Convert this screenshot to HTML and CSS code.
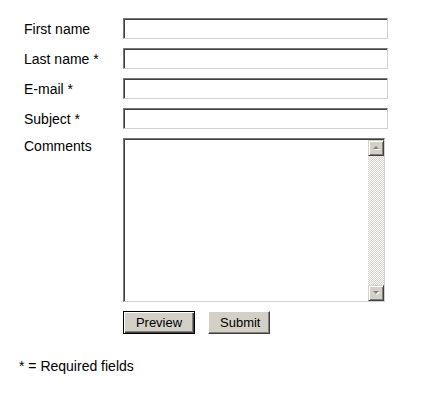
FILE: index.html
```html
<!DOCTYPE html>
<html lang="en">
<head>
    <meta charset="UTF-8">
    <title>Contact</title>
    <link rel="stylesheet" href="styles.css">
</head>
<body>
    <form class="contact-form" onsubmit="return false">
        <div class="form-grid">
            <label for="first-name">First name</label>
            <input type="text" id="first-name" class="field">

            <label for="last-name">Last name *</label>
            <input type="text" id="last-name" class="field">

            <label for="email">E-mail *</label>
            <input type="text" id="email" class="field">

            <label for="subject">Subject *</label>
            <input type="text" id="subject" class="field">

            <label for="comments" class="label-top">Comments</label>
            <div class="comments-box">
                <textarea id="comments"></textarea>
                <!-- old style scrollbar -->
                <div class="scrollbar">
                    <span class="scroll-btn">
                        <svg width="7" height="5" viewBox="0 0 7 5"><path d="M1 4h6L4 1z" fill="#fff"/><path d="M0 3h6L3 0z" fill="#808080"/></svg>
                    </span>
                    <span class="scroll-track"></span>
                    <span class="scroll-btn">
                        <svg width="7" height="5" viewBox="0 0 7 5"><path d="M1 1h6L4 4z" fill="#fff"/><path d="M0 0h6L3 3z" fill="#808080"/></svg>
                    </span>
                </div>
            </div>

            <div class="actions">
                <button type="button" class="btn btn-default">Preview</button>
                <button type="submit" class="btn">Submit</button>
            </div>
        </div>
        <p class="note">* = Required fields</p>
    </form>
</body>
</html>
```

FILE: styles.css
```css
body {
    margin: 0;
    background: #fff;
    font-family: 'Liberation Sans', Arial, sans-serif;
    font-size: 14px;
    color: #000;
}

.contact-form {
    padding: 18px 0 0 19px;
}

.form-grid {
    display: grid;
    grid-template-columns: 99px 265px;
    row-gap: 9px;
    align-items: center;
    margin-left: 5px;
}

.form-grid label {
    line-height: 16px;
}

.form-grid .label-top {
    align-self: start;
}

/* sunken text fields */
.field {
    box-sizing: border-box;
    width: 265px;
    height: 21px;
    margin: 0;
    padding: 1px 3px;
    border: 1px solid;
    border-color: #7a7a7a #d0d0d0 #d0d0d0 #7a7a7a;
    box-shadow: inset 1px 1px 0 #404040;
    background: #fff;
    font: 13px 'Liberation Sans', Arial, sans-serif;
    outline: none;
}

.comments-box {
    box-sizing: border-box;
    display: flex;
    width: 262px;
    height: 164px;
    padding: 1px 0 0 1px;
    border: 1px solid;
    border-color: #7a7a7a #d0d0d0 #d0d0d0 #7a7a7a;
    background: #404040;
}

.comments-box textarea {
    flex: 1;
    margin: 0;
    padding: 2px;
    border: none;
    resize: none;
    background: #fff;
    font: 13px 'Liberation Sans', Arial, sans-serif;
    outline: none;
}

.scrollbar {
    display: flex;
    flex-direction: column;
    width: 16px;
    background: #fff;
}

.scroll-btn {
    box-sizing: border-box;
    display: flex;
    align-items: center;
    justify-content: center;
    height: 16px;
    background: #d4d0c8;
    border: 1px solid;
    border-color: #d4d0c8 #404040 #404040 #d4d0c8;
    box-shadow: inset 1px 1px 0 #fff, inset -1px -1px 0 #808080;
}

.scroll-track {
    flex: 1;
    background: repeating-conic-gradient(#d4d0c8 0 25%, #fff 0 50%) 0 0 / 2px 2px;
}

.actions {
    grid-column: 2;
    display: flex;
    gap: 13px;
}

.btn {
    box-sizing: border-box;
    height: 23px;
    padding: 0 11px;
    border: 1px solid;
    border-color: #fff #404040 #404040 #fff;
    box-shadow: inset -1px -1px 0 #808080;
    background: #d4d0c8;
    font: 13px 'Liberation Sans', Arial, sans-serif;
    color: #000;
    cursor: pointer;
}

.btn-default {
    width: 72px;
    border: 1px solid #000;
    box-shadow: inset 1px 1px 0 #fff, inset -1px -1px 0 #404040, inset -2px -2px 0 #808080;
}

.btn:not(.btn-default) {
    width: 62px;
}

.note {
    margin: 24px 0 0;
    line-height: 16px;
}
```
